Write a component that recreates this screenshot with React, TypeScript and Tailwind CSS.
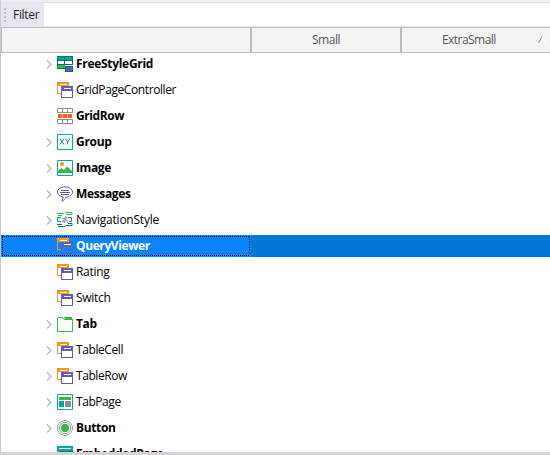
import type { ReactNode } from "react";

const Chevron = () => (
  <svg width="6" height="9" viewBox="0 0 6 9" fill="none" stroke="#b2b5bb" strokeWidth="1.2">
    <path d="M1 .5l4 4-4 4" />
  </svg>
);

const Icon = ({ children, crisp = true }: { children: ReactNode; crisp?: boolean }) => (
  <svg width="16" height="16" viewBox="0 0 16 16" fill="none" shapeRendering={crisp ? "crispEdges" : "auto"}>
    {children}
  </svg>
);

const GridIcon = () => (
  <Icon>
    <path fill="#00756d" d="M0 0h16v9H8v4H0z" />
    <path fill="#00a99d" d="M1 1h6v3H1zM8 1h7v3H8z" />
    <path fill="#fff" d="M1 5h6v3H1zM8 5h7v3H8z" />
    <path fill="#39b54a" d="M1 9h7v3H1z" />
    <path fill="#00756d" d="M8 10h8v6H8z" />
    <path fill="#655bab" d="M9 11h6v4H9z" />
  </Icon>
);

const ControlIcon = () => (
  <Icon>
    <path fill="#f7941d" d="M0 0h12v4H0zM0 4h1v8H0zM1 11h3v1H1z" />
    <path fill="#fff" d="M3 2h7v1H3z" />
    <path fill="#655bab" d="M4 4h12v5H4zM4 9h1v7H4zM15 9h1v7h-1zM5 15h10v1H5z" />
    <path fill="#fff" d="M7 6h7v1H7z" />
  </Icon>
);

const RowIcon = () => (
  <Icon>
    <path fill="#8a8f94" d="M0 0h16v5H0zM0 11h16v5H0z" />
    <path fill="#fff" d="M1 1h4v3H1zM6 1h4v3H6zM11 1h4v3h-4zM1 12h4v3H1zM6 12h4v3H6zM11 12h4v3h-4z" />
    <path fill="#f26522" d="M1 6h4v4H1zM6 6h4v4H6zM11 6h4v4h-4z" />
    <path fill="#f8b596" d="M5 6h1v4H5zM10 6h1v4h-1z" />
  </Icon>
);

const GroupIcon = () => (
  <Icon crisp={false}>
    <path stroke="#00a99d" d="M.5.5h15v15H.5z" />
    <path stroke="#00756d" strokeWidth=".9" d="M3 4.500l4 6M7 4.500l-4 6M8.500 4.500l2.200 3.200L13 4.500M10.700 7.500v3" />
  </Icon>
);

const ImageIcon = () => (
  <Icon crisp={false}>
    <path stroke="#00a99d" d="M.5.5h15v15H.5z" />
    <circle cx="5" cy="4" r="2" fill="#f7941d" />
    <path fill="#39b54a" d="M1 13V11l3.500-3 2.500 2 3-3.500L15 11v2z" />
  </Icon>
);

const MessageIcon = () => (
  <Icon crisp={false}>
    <path stroke="#655bab" d="M8 .9c4.200 0 7.500 2.100 7.500 5.200 0 2.800-2.800 4.800-6.500 5.100-1 1.900-2.200 3.200-4 4 .7-1.400 1-2.800.9-4.200C2.700 10.500.5 8.600.5 6.100.5 3 3.800.9 8 .9z" />
    <path stroke="#655bab" d="M4 4.500h8M3 6.500h10M4 8.500h8" />
  </Icon>
);

const NavigationIcon = () => (
  <Icon crisp={false}>
    <path stroke="#39b54a" d="M0 1.500h7l1-1h7v2H9M1 3.500h4" />
    <path stroke="#00a99d" d="M4 5.500H.5v4H4" />
    <path stroke="#655bab" d="M11 5.500h3.500v4H12" />
    <path stroke="#00756d" d="M0 12.500h5M1 14.500h7l1-1h6v-2h-4" />
    <path stroke="#9a9ea3" strokeWidth="1.300" d="M5 6l2 1M9 4.500l-1.500 3 3-2M5 10l2-1.500 1 2.500M9.500 8l1.500 3M8 7l2 2" />
  </Icon>
);

const TabIcon = () => (
  <Icon>
    <path fill="#39b54a" d="M0 2h1V1h5v1h1v1h9v13H0z" />
    <path fill="#fff" d="M1 2h5v1h1v1h8v11H1z" />
    <path fill="#39b54a" d="M7 1h8v2H8V2H7z" />
  </Icon>
);

const TabPageIcon = () => (
  <Icon crisp={false}>
    <path stroke="#00a99d" d="M.5.5h15v15H.5z" />
    <rect x="2" y="3" width="12" height="3" rx=".5" fill="#39b54a" />
    <rect x="2" y="7" width="5" height="6" rx=".5" fill="#00a99d" />
    <rect x="8" y="7" width="6" height="6" rx=".5" fill="#8a8f94" />
  </Icon>
);

const ButtonIcon = () => (
  <Icon crisp={false}>
    <circle cx="8" cy="8" r="7.500" stroke="#8a8f94" strokeWidth=".9" />
    <circle cx="8" cy="8" r="5.600" stroke="#8a8f94" strokeWidth=".9" />
    <circle cx="8" cy="8" r="4.200" fill="#39b54a" />
  </Icon>
);

const EmbeddedIcon = () => (
  <Icon>
    <path fill="#00a99d" d="M0 0h16v16H0z" />
    <path fill="#fff" d="M2 2h12v1H2z" />
    <path fill="#00756d" d="M4 5h12v11H4z" />
  </Icon>
);

type Row = { name: string; icon: ReactNode; bold?: boolean; open?: boolean; selected?: boolean; track: string };

const rows: Row[] = [
  { name: "FreeStyleGrid", icon: <GridIcon />, bold: true, open: true, track: "tracking-[-0.3px]" },
  { name: "GridPageController", icon: <ControlIcon />, track: "tracking-[-0.41px]" },
  { name: "GridRow", icon: <RowIcon />, bold: true, track: "tracking-[-0.4px]" },
  { name: "Group", icon: <GroupIcon />, bold: true, open: true, track: "tracking-[-0.3px]" },
  { name: "Image", icon: <ImageIcon />, bold: true, open: true, track: "tracking-[-0.4px]" },
  { name: "Messages", icon: <MessageIcon />, bold: true, open: true, track: "tracking-[-0.35px]" },
  { name: "NavigationStyle", icon: <NavigationIcon />, open: true, track: "tracking-[-0.23px]" },
  { name: "QueryViewer", icon: <ControlIcon />, bold: true, selected: true, track: "tracking-[-0.4px]" },
  { name: "Rating", icon: <ControlIcon />, track: "tracking-[-0.3px]" },
  { name: "Switch", icon: <ControlIcon />, track: "tracking-[-0.3px]" },
  { name: "Tab", icon: <TabIcon />, bold: true, open: true, track: "tracking-[-0.4px]" },
  { name: "TableCell", icon: <ControlIcon />, open: true, track: "tracking-[-0.41px]" },
  { name: "TableRow", icon: <ControlIcon />, open: true, track: "tracking-[-0.42px]" },
  { name: "TabPage", icon: <TabPageIcon />, open: true, track: "tracking-[-0.44px]" },
  { name: "Button", icon: <ButtonIcon />, bold: true, open: true, track: "tracking-[-0.35px]" },
  { name: "EmbeddedPage", icon: <EmbeddedIcon />, bold: true, track: "tracking-[-0.35px]" },
];

const TreeRow = ({ row }: { row: Row }) => (
  <div className="flex h-[26px] shrink-0 items-center">
    <div className={`flex h-[22px] w-full ${row.selected ? "bg-[#0078d7]" : ""}`}>
      <div className={`relative flex w-[250px] items-center pl-[45px] ${row.selected ? "bg-[#0a84ff]" : ""}`}>
        {row.selected && (
          <svg className="absolute inset-0" width="250" height="22" fill="none" shapeRendering="crispEdges">
            <path d="M1 1.500h248M1.500 2v18M1 20.500h248M248.500 2v18" stroke="#000" strokeDasharray="1 1" />
          </svg>
        )}
        <div className="w-[11px]">{row.open && <Chevron />}</div>
        <div className="w-[19px]">{row.icon}</div>
        <span className={`whitespace-nowrap ${row.track} ${row.bold ? "font-bold" : ""} ${row.selected ? "text-white" : "text-black"}`}>
          {row.name}
        </span>
      </div>
    </div>
  </div>
);

export default function App() {
  return (
    <div className="flex h-[455px] w-[550px] flex-col overflow-hidden bg-white font-['Open_Sans','Noto_Sans',sans-serif] text-[12px] leading-4">
      <div className="flex h-[450px] grow flex-col overflow-hidden border-l border-[#cbc9cf]">
        <div className="h-[3px] shrink-0 border-b border-[#e1e1ee] bg-[#f0f0f0]" />
        <div className="flex h-6 shrink-0 border-b border-[#e4e4ef]">
          <div className="flex w-[43px] items-center bg-[#e6e6f0] pl-[3px]">
            <div className="flex w-[9px] flex-col gap-[2px]">
              <i className="size-[2px] bg-[#bdbdc7]" />
              <i className="size-[2px] bg-[#bdbdc7]" />
              <i className="size-[2px] bg-[#bdbdc7]" />
              <i className="size-[2px] bg-[#bdbdc7]" />
            </div>
            <span className="tracking-[-0.3px] text-[#1e1e1e]">Filter</span>
          </div>
        </div>
        <div className="flex h-[26px] shrink-0 border-y border-[#bcbcc2] bg-[#f4f4f4] text-[#555]">
          <div className="w-[251px] border-r-2 border-l border-[#bcbcbc]" />
          <div className="flex w-[150px] items-center justify-center border-r-2 border-[#bcbcbc] tracking-[-0.5px]">Small</div>
          <div className="flex flex-1 items-center pl-[40px] tracking-[-0.55px]">
            <span className="w-[96px]">ExtraSmall</span>
            <svg width="9" height="8" viewBox="0 0 9 8" fill="none">
              <path d="M4 .5l4 7H.5" stroke="#fff" />
              <path d="M.5 7l3.500-6.500" stroke="#888" />
            </svg>
          </div>
        </div>
        <div className="flex min-h-0 flex-1 flex-col overflow-hidden">
          <div className="-mt-[2px] flex flex-col">
            {rows.map((row) => (
              <TreeRow key={row.name} row={row} />
            ))}
          </div>
        </div>
      </div>
      <div className="h-[3px] shrink-0 bg-[#d6d3d6]" />
    </div>
  );
}
